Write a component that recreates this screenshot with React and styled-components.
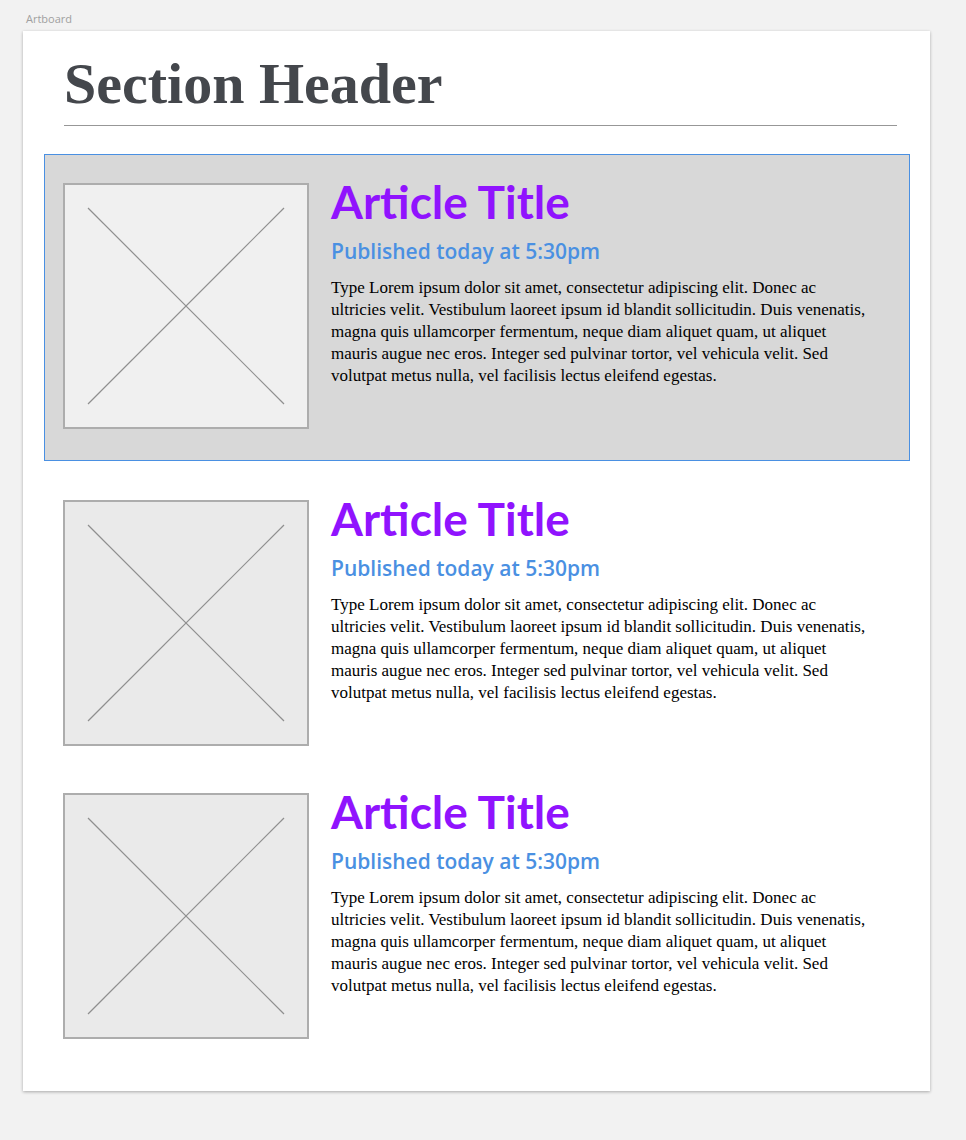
import React from "react";
import styled, { createGlobalStyle } from "styled-components";

const GlobalStyle = createGlobalStyle`
  html, body {
    margin: 0;
    padding: 0;
    background: #f2f2f2;
  }
`;

const body =
  "Type Lorem ipsum dolor sit amet, consectetur adipiscing elit. Donec ac ultricies velit. Vestibulum laoreet ipsum id blandit sollicitudin. Duis venenatis, magna quis ullamcorper fermentum, neque diam aliquet quam, ut aliquet mauris augue nec eros. Integer sed pulvinar tortor, vel vehicula velit. Sed volutpat metus nulla, vel facilisis lectus eleifend egestas.";

const articles = [
  { id: 1, selected: true },
  { id: 2, selected: false },
  { id: 3, selected: false },
];

const Placeholder = ({ selected }) => (
  <ImageBox $selected={selected}>
    <svg width="242" height="242" viewBox="0 0 242 242">
      <line x1="23" y1="23" x2="219" y2="219" stroke="#8f8f8f" strokeWidth="1.2" />
      <line x1="219" y1="23" x2="23" y2="219" stroke="#8f8f8f" strokeWidth="1.2" />
    </svg>
  </ImageBox>
);

const App = () => {
  return (
    <Page>
      <GlobalStyle />
      <Label>Artboard</Label>
      <Artboard>
        <Header>Section Header</Header>
        <Rule />
        <List>
          {articles.map((a) => (
            <Article key={a.id} $selected={a.selected}>
              <Placeholder selected={a.selected} />
              <Content>
                <Title>Article Title</Title>
                <Published>Published today at 5:30pm</Published>
                <Body>{body}</Body>
              </Content>
            </Article>
          ))}
        </List>
      </Artboard>
    </Page>
  );
};

export default App;

const Page = styled.div`
  padding: 12px 36px 48px 23px;
  min-height: 1140px;
  box-sizing: border-box;
`;

const Label = styled.div`
  font-family: "Open Sans", "Liberation Sans", sans-serif;
  font-size: 11px;
  line-height: 14px;
  color: #a0a0a0;
  padding-left: 3px;
  margin-bottom: 5px;
`;

const Artboard = styled.div`
  width: 907px;
  box-sizing: border-box;
  background: #fff;
  padding: 24px 33px 52px 41px;
  box-shadow: 0 1px 3px rgba(0, 0, 0, 0.3);
`;

const Header = styled.h1`
  margin: 0;
  font-family: "Liberation Serif", "Times New Roman", serif;
  font-weight: bold;
  font-size: 58px;
  line-height: 58px;
  color: #44474c;
`;

const Rule = styled.div`
  height: 1px;
  background: #979797;
  margin-top: 12px;
`;

const List = styled.div`
  display: flex;
  flex-direction: column;
  gap: 47px;
  margin: 28px -13px 0 -20px;
`;

const Article = styled.div`
  display: flex;
  gap: 22px;
  border: ${(p) => (p.$selected ? "1px solid #4a90e2" : "none")};
  background: ${(p) => (p.$selected ? "#d8d8d8" : "transparent")};
  padding: ${(p) => (p.$selected ? "28px 38px 31px 18px" : "0 39px 0 19px")};
  margin-bottom: ${(p) => (p.$selected ? "-8px" : "0")};
`;

const ImageBox = styled.div`
  flex: none;
  width: 246px;
  height: 246px;
  box-sizing: border-box;
  border: 2px solid #adadad;
  background: ${(p) => (p.$selected ? "#f0f0f0" : "#eaeaea")};

  svg {
    display: block;
  }
`;

const Content = styled.div`
  flex: 1;
  max-width: 540px;
`;

const Title = styled.h2`
  margin: 0;
  font-family: Lato, "Open Sans", sans-serif;
  font-weight: bold;
  font-size: 46px;
  line-height: 34px;
  color: #9013fe;
  padding-top: 2px;
`;

const Published = styled.div`
  margin-top: 20px;
  font-family: "Open Sans", Lato, sans-serif;
  font-weight: 600;
  font-size: 21px;
  line-height: 24px;
  color: #4a90e2;
`;

const Body = styled.p`
  margin: 14px 0 0;
  font-family: "Liberation Serif", "Times New Roman", serif;
  font-size: 17px;
  line-height: 22px;
  color: #000;
`;
